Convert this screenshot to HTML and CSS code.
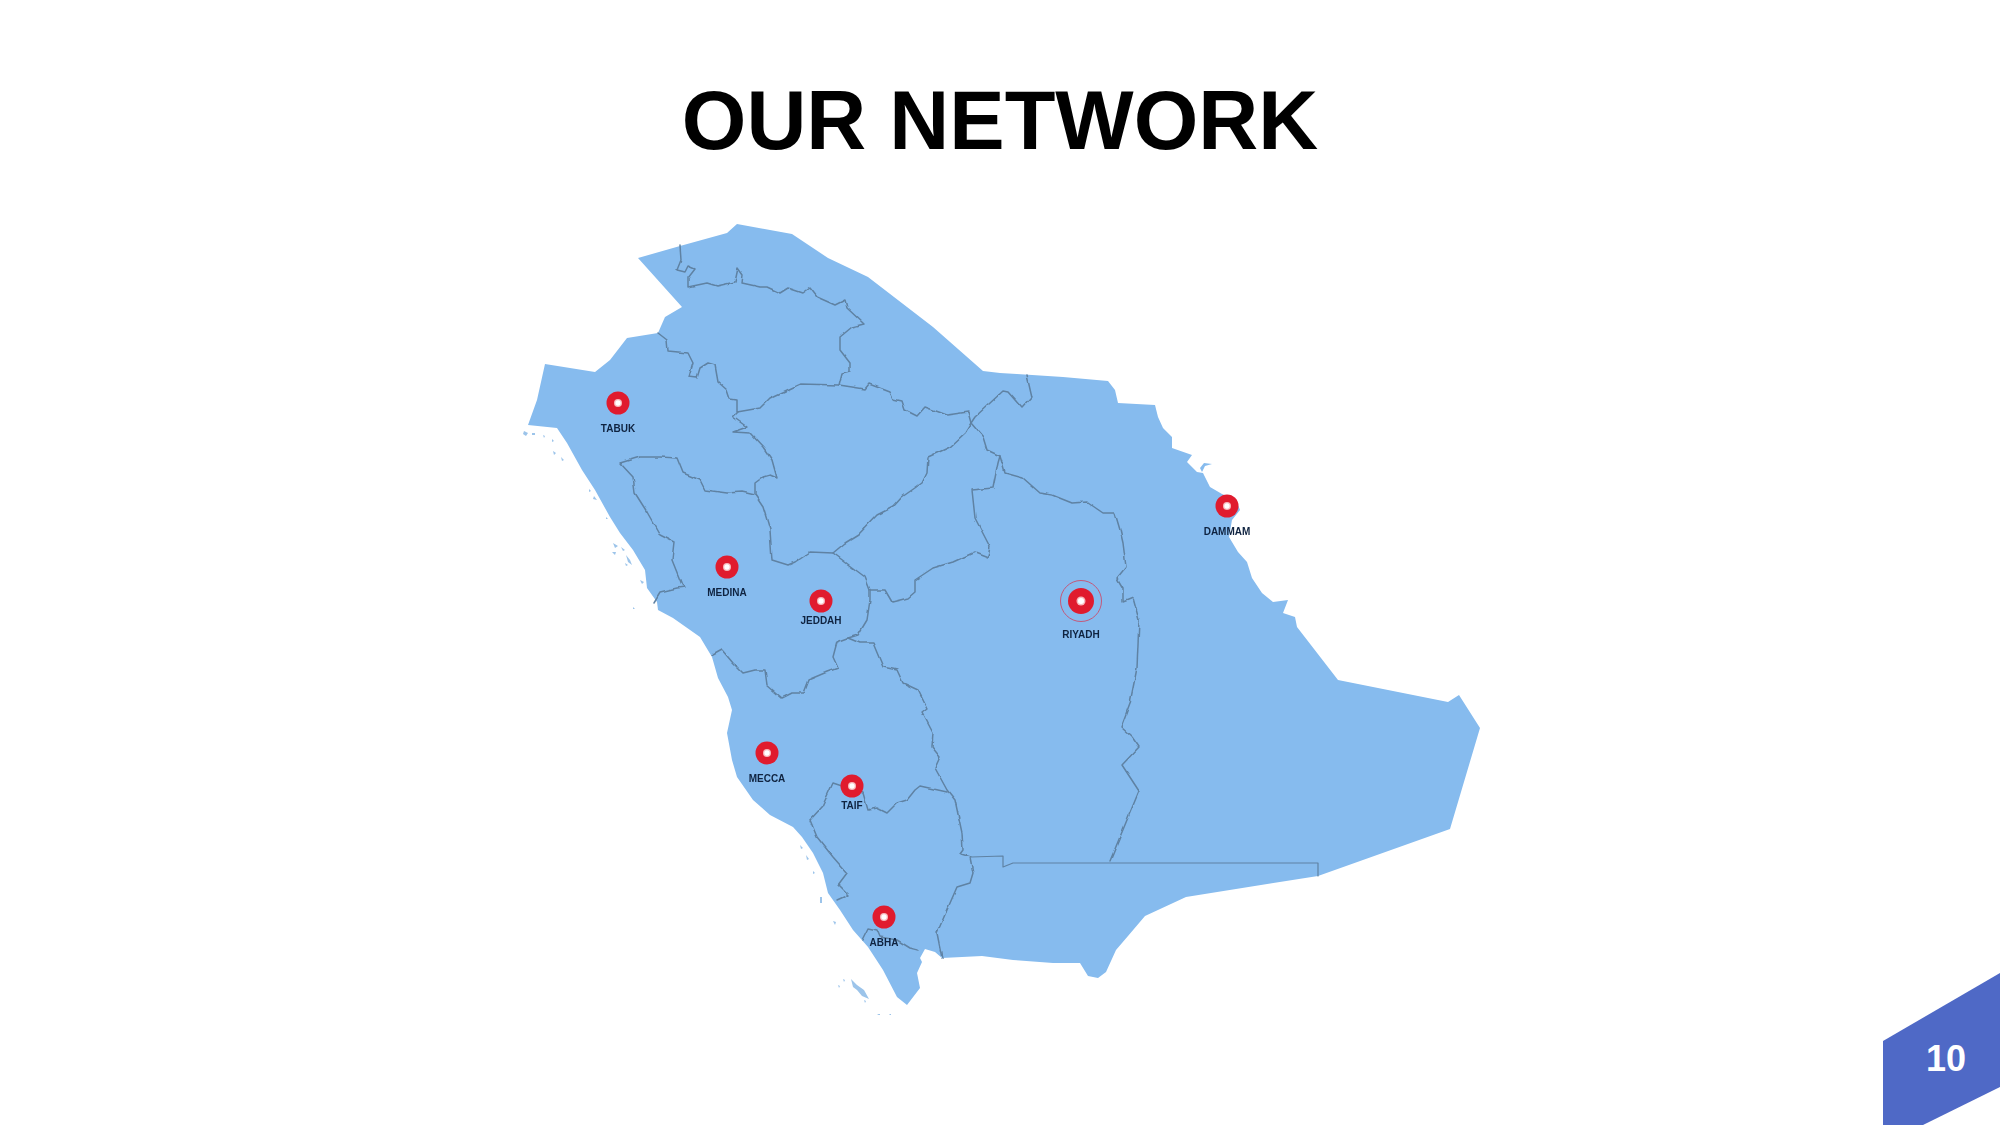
FILE: index.html
```html
<!DOCTYPE html>
<html lang="en">
<head>
<meta charset="utf-8">
<title>Our Network</title>
<link rel="stylesheet" href="styles.css">
</head>
<body>
<main class="slide">
  <h1 class="title">OUR NETWORK</h1>
  <svg class="map" viewBox="500 215 1000 800" role="img" aria-label="Map of network cities">
    <defs>
      <filter id="wiggle" x="-5%" y="-5%" width="110%" height="110%">
        <feTurbulence type="fractalNoise" baseFrequency="0.08" numOctaves="2" seed="7" result="noise"/>
        <feDisplacementMap in="SourceGraphic" in2="noise" scale="3.5" xChannelSelector="R" yChannelSelector="G"/>
        <feGaussianBlur stdDeviation="0.45"/>
      </filter>
      <filter id="coast" x="-5%" y="-5%" width="110%" height="110%">
        <feTurbulence type="fractalNoise" baseFrequency="0.1" numOctaves="1" seed="3" result="noise"/>
        <feDisplacementMap in="SourceGraphic" in2="noise" scale="1.5" xChannelSelector="R" yChannelSelector="G"/>
        <feGaussianBlur stdDeviation="0.55"/>
      </filter>
      <g id="pin">
        <circle class="pin-disc" r="11.5"/>
        <circle class="pin-glow" r="4"/>
        <circle class="pin-eye" r="2.7"/>
      </g>
    </defs>
    <g class="land-layer">
      <path class="land" d="M638 258L680 246L727 233L737 224L792 234L828 258L868 277L933 327L983 371L1000 373L1063 377L1108 381L1115 390L1118 403L1155 405L1158 417L1163 428L1172 437L1172 448L1192 455L1187 462L1197 472L1203 473L1210 487L1222 494L1236 500L1240 510L1232 520L1229 537L1238 552L1247 562L1252 578L1262 593L1273 602L1288 600L1283 613L1295 617L1297 627L1338 680L1448 702L1459 695L1480 728L1450 829L1318 876L1186 897L1145 916L1128 936L1116 950L1106 972L1098 978L1088 976L1080 963L1053 963L1013 960L982 956L942 958L935 952L925 949L920 958L922 962L917 973L920 988L907 1005L897 997L883 970L868 947L853 930L840 910L828 893L823 873L813 853L802 837L793 827L770 815L753 800L737 777L732 760L727 733L732 710L728 697L718 678L712 657L700 637L673 618L658 610L657 602L647 588L645 570L633 550L620 533L610 517L595 490L582 470L567 443L557 428L528 425L537 400L545 364L595 372L610 360L627 338L658 333L665 317L682 307Z"/>
      <path class="land" d="M1200 468L1204 463L1212 464L1205 466L1202 472Z"/>
      <path class="isles" d="M524 431l4 2l-2 3l-3-2zM532 433l3 0l0 2l-3 0zM543 435l2 1l-1 2zM552 439l2 2l-2 1zM553 451l3 2l-2 2zM561 457l3 3l-2 1zM589 489l2 2l-2 1zM594 496l3 4l-4-1zM606 517l2 2l-2 0zM613 543l5 3l-3 2zM612 552l4 0l-1 3zM621 547l4 3l-2 1zM626 555l4 5l2 5l-4-3zM625 563l3 2l-2 1zM640 580l4 2l-2 2zM633 607l2 2l-2 0zM800 845l3 3l-2 1zM806 855l3 4l-2 1zM813 871l2 2l-2 1zM820 897l2 0l0 6l-2 0zM833 921l3 1l-1 3zM843 979l2 1l-1 2zM838 985l2 1l-1 2zM851 979l6 6l7 5l5 9l-7-3l-5-6l-4-3zM864 1000l2 1l-1 2zM877 1014l3 0l0 2zM889 1014l2 0l0 2zM872 1016l2 0l0 2z"/>
    </g>
    <g class="borders">
      <path d="M680 246L681 260L677 270L685 272L688 266L695 269L688 278L688 287L707 283L717 286L735 282L738 268L743 275L742 283L760 287L767 287L780 293L788 288L803 293L810 288L817 297L835 305L845 300L847 308L864 324L852 327L840 337L840 350L850 363L850 371L842 373L839 385"/>
      <path d="M658 333L667 340L668 351L688 353L693 363L689 377L697 378L700 368L708 363L715 365L718 382L727 390L730 399L737 400L737 412L760 408L770 398L800 384L839 385L865 389L869 384L890 392L893 399L902 401L905 410L917 416L925 407L947 415L968 412L971 423L983 437L987 450L1000 456L1005 473L1023 478L1040 493L1052 495L1072 503L1087 502L1103 513L1115 513L1120 530L1123 543L1126 567L1117 578L1123 588L1123 602L1133 598L1139 620L1137 668L1130 703L1121 727L1132 737L1139 747L1122 765L1139 791L1110 861"/>
      <path d="M971 423L975 417L1003 391L1008 392L1022 408L1032 397L1027 375"/>
      <path d="M971 423L965 433L950 447L928 457L927 473L922 483L902 497L893 507L877 515L858 535L845 543L833 553L810 552L795 562L788 565L772 560L770 530L763 507L755 495L742 492L727 493L705 490L700 480L683 473L677 458L660 457L640 457L620 463L633 477L635 493L647 512L660 535L674 542L672 560L682 585L685 587L677 588L660 592L654 602"/>
      <path d="M755 495L755 483L763 477L770 475L777 478L772 460L763 447L750 433L733 432L747 427L733 417L738 412"/>
      <path d="M833 553L853 568L865 577L870 590L885 590L892 602L908 598L915 592L915 580L933 568L953 562L975 552L988 557L990 547L975 518L972 490L993 488L998 463L1000 456"/>
      <path d="M870 590L870 600L867 620L858 635L848 638L837 642L833 657L838 668L827 672L808 680L803 693L792 693L782 698L767 685L765 670L755 670L743 673L733 663L722 650L713 655"/>
      <path d="M848 638L860 643L873 643L883 667L897 670L903 683L918 690L927 708L922 712L933 733L932 747L940 757L935 768L947 790L955 800L962 833L963 850L960 854L970 857L973 873L970 883L957 887L937 933L942 958"/>
      <path d="M947 792L920 786L915 790L907 800L897 803L887 813L877 808L868 810L863 793L833 783L822 807L810 820L817 837L833 857L847 873L838 885L848 895L837 900"/>
      <path d="M862 940L868 928L877 930L880 937L897 940L910 948L918 950"/>
    </g>
    <path class="straight" d="M971 857L1003 856L1003 867L1013 863L1318 863L1318 876"/>
    <circle class="ring" cx="1081" cy="601" r="20.5"/>
    <use href="#pin" x="618" y="403"/>
    <use href="#pin" x="727" y="567"/>
    <use href="#pin" x="821" y="601"/>
    <use href="#pin" x="1227" y="506"/>
    <use href="#pin" x="767" y="753"/>
    <use href="#pin" x="852" y="786"/>
    <use href="#pin" x="884" y="917"/>
    <g transform="translate(1081 601) scale(1.13)"><use href="#pin"/></g>
    <text class="city" x="618" y="432">TABUK</text>
    <text class="city" x="727" y="596">MEDINA</text>
    <text class="city" x="821" y="624">JEDDAH</text>
    <text class="city" x="1081" y="638">RIYADH</text>
    <text class="city" x="1227" y="535">DAMMAM</text>
    <text class="city" x="767" y="782">MECCA</text>
    <text class="city" x="852" y="809">TAIF</text>
    <text class="city" x="884" y="946">ABHA</text>
  </svg>
  <div class="page-badge">10</div>
</main>
</body>
</html>
```

FILE: styles.css
```css
* { box-sizing: border-box; }
html, body { margin: 0; padding: 0; background: #fff; }
.slide {
  position: relative;
  width: 2000px;
  height: 1125px;
  overflow: hidden;
  display: flex;
  flex-direction: column;
  align-items: center;
  font-family: "Liberation Sans", Arial, sans-serif;
}
.title {
  height: 215px;
  margin: 0;
  padding-top: 73px;
  font-size: 83px;
  line-height: 96px;
  font-weight: 700;
  color: #000;
}
.map { display: block; width: 1000px; height: 800px; flex: none; }
.land-layer { filter: url(#coast); }
.land { fill: #86bbee; }
.isles { fill: #9cc4ea; }
.borders { filter: url(#wiggle); }
.borders path, .straight {
  fill: none;
  stroke: #5f82a3;
  stroke-width: 1.5;
  stroke-linejoin: round;
  stroke-linecap: round;
}
.straight { stroke-width: 1.2; filter: blur(0.35px); }
.pin-disc { fill: #e01b2e; }
.pin-glow { fill: #f7b9bd; }
.pin-eye { fill: #fff; }
.ring { fill: none; stroke: #c4587a; stroke-width: 1; }
.city {
  font-family: "Liberation Sans", Arial, sans-serif;
  font-size: 10px;
  font-weight: 700;
  fill: #0f2340;
  text-anchor: middle;
  filter: blur(0.25px);
}
.page-badge {
  position: absolute;
  right: 0;
  bottom: 0;
  width: 117px;
  height: 152px;
  padding: 20px 0 0 9px;
  display: flex;
  align-items: center;
  justify-content: center;
  background: #4f69c6;
  clip-path: polygon(0 68px, 100% 0, 100% 114px, 40px 100%, 0 100%);
  color: #fff;
  font-size: 36px;
  font-weight: 700;
}
```
